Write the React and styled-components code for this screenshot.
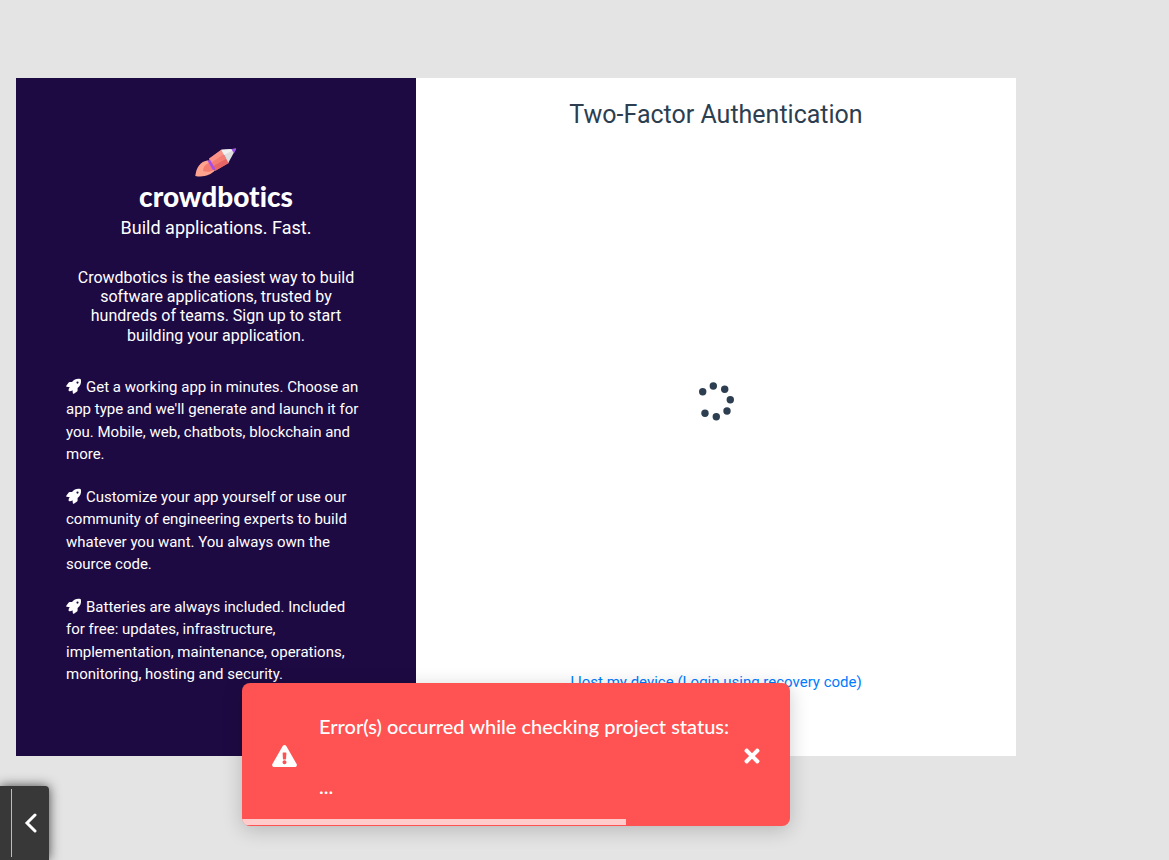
import React from "react";
import styled, { createGlobalStyle } from "styled-components";
import { FaExclamationTriangle, FaTimes } from "react-icons/fa";

const GlobalStyle = createGlobalStyle`
  *, *::before, *::after { box-sizing: border-box; }
  body {
    margin: 0;
    background: #e4e4e4;
    color: #2c3e50;
    font-family: Roboto, "Liberation Sans", sans-serif;
  }
  h1, p, ul { margin: 0; padding: 0; }
`;

const Page = styled.main`
  min-height: 100vh;
  padding: 78px 16px 104px;
`;

const Card = styled.div`
  position: relative;
  display: grid;
  grid-template-columns: 2fr 3fr;
  width: 100%;
  max-width: 1000px;
  background: #fff;
`;

const Promo = styled.section`
  display: flex;
  flex-direction: column;
  align-items: center;
  padding: 70px 50px;
  background: #1e0a43;
  color: #fff;
`;

const LogoMark = styled.svg`
  display: block;
  width: 42px;
  height: 30px;
`;

const Wordmark = styled.div`
  font: 900 28px/36px Lato, "Liberation Sans", sans-serif;
  font-variant-ligatures: none;
`;

const Tagline = styled.p`
  font-size: 18px;
  line-height: 28px;
`;

const Intro = styled.p`
  margin-top: 26px;
  padding: 0 8px;
  font-size: 16px;
  line-height: 1.2;
  text-align: center;
`;

const Benefits = styled.ul`
  display: flex;
  flex-direction: column;
  gap: 20px;
  width: 100%;
  margin-top: 31px;
  list-style: none;
`;

const Benefit = styled.li`
  font-size: 15px;
  line-height: 1.5;
`;

const BulletIcon = styled.svg`
  width: 16px;
  height: 16px;
  margin-right: 4px;
  fill: currentColor;
  vertical-align: -2px;
`;

const AuthPanel = styled.section`
  display: flex;
  flex-direction: column;
  align-items: center;
  justify-content: space-between;
  padding: 20px 20px 63px;
`;

const Title = styled.h1`
  font-size: 25px;
  font-weight: 400;
  line-height: 33px;
`;

const Spinner = styled.svg`
  width: 40px;
  height: 40px;
  fill: #2c3e50;
`;

const RecoveryLink = styled.a`
  color: #007bff;
  font-size: 15px;
  line-height: 22px;
  text-decoration: none;
`;

const Toast = styled.div`
  position: absolute;
  left: 50%;
  bottom: -70px;
  display: flex;
  align-items: center;
  width: 548px;
  max-width: 100%;
  padding: 28px 30px 25px;
  overflow: hidden;
  transform: translateX(-50%);
  border-radius: 8px;
  background: #ff5252;
  box-shadow: 0 4px 20px rgba(0, 0, 0, 0.2);
  color: #fff;
  font-family: Lato, "Liberation Sans", sans-serif;
  font-size: 20px;
  font-weight: 500;
  line-height: 30px;
`;

const ToastIcon = styled(FaExclamationTriangle)`
  flex: none;
  width: 25px;
  height: 22px;
`;

const ToastBody = styled.div`
  display: flex;
  flex: 1;
  flex-direction: column;
  gap: 30px;
  min-width: 0;
  margin-left: 22px;
  white-space: nowrap;
`;

const CloseButton = styled.button`
  display: flex;
  flex: none;
  padding: 0;
  border: 0;
  background: none;
  color: inherit;
  cursor: pointer;

  svg { width: 16px; height: 22px; }
`;

const ToastProgress = styled.div`
  position: absolute;
  left: 0;
  bottom: 1px;
  width: 70%;
  height: 6px;
  background: rgba(255, 255, 255, 0.7);
`;

const SideTab = styled.button`
  position: fixed;
  left: 0;
  bottom: 0;
  display: flex;
  align-items: center;
  width: 49px;
  height: 74px;
  padding: 3px 12px 3px 11px;
  border: 0;
  border-radius: 0 4px 0 0;
  background: #383838;
  box-shadow: 0 0 12px rgba(0, 0, 0, 0.7);
  cursor: pointer;

  &::before {
    content: "";
    align-self: stretch;
    width: 1px;
    margin-right: 12px;
    background: #bdbdbd;
  }

  svg { width: 13px; height: 20px; }
`;

const benefits = [
  "Get a working app in minutes. Choose an app type and we'll generate and launch it for you. Mobile, web, chatbots, blockchain and more.",
  "Customize your app yourself or use our community of engineering experts to build whatever you want. You always own the source code.",
  "Batteries are always included. Included for free: updates, infrastructure, implementation, maintenance, operations, monitoring, hosting and security.",
];

const spinnerDots = [
  [6.7, 10.7],
  [17.3, 5],
  [28.7, 8.3],
  [34.3, 18.7],
  [31, 30],
  [20.3, 35.7],
  [9, 32.3],
];

function PencilRocket() {
  return (
    <LogoMark viewBox="30 21 126 90" aria-hidden="true">
      <path d="M31 105C33 83 44 61 70 58L90 88C77 103 54 110 31 105Z" fill="#ffa38f" />
      <path d="M54 90C55 76 63 68 75 66L88 86C79 92 66 94 54 90Z" fill="#f47c70" />
      <path d="M72 53L109 26L131 66L91 89Z" fill="#f47c72" />
      <path d="M72 53L109 26L117 39L79 65Z" fill="#fa9288" />
      <path d="M84 76L124 53L131 66L91 89Z" fill="#e76565" />
      <path d="M109 26L153 23L130 65Z" fill="#dedede" />
      <path d="M109 26L153 23L117 42Z" fill="#f1f1f1" />
      <path d="M139 24L154 23L147 37Z" fill="#9b51e8" />
      <path d="M68 60L75 56L91 84L84 88Z" fill="#a64df0" />
    </LogoMark>
  );
}

function Rocket() {
  return (
    <BulletIcon viewBox="0 0 16 16" aria-hidden="true">
      <path
        fillRule="evenodd"
        d="M14.3 1C11 .4 8.3 1.2 6 4.1H4C3.2 4.1 2.7 4.4 2.3 5L.3 7.8C0 8.4.3 8.8.9 8.8L3.8 9.2C2.9 10.2 2.5 11.2 2.6 12.6C2.6 13 2.9 13.2 3.3 13.2C4.6 13.3 5.7 13 6.5 12.2L6.8 15C6.8 15.7 7.3 16 7.9 15.7L10.7 13.8C11.3 13.4 11.6 13 11.6 12.2V10C14.5 7.8 15.5 5 14.9 1.6C14.8 1.2 14.6 1 14.3 1ZM11.5 3.5A1.1 1.1 0 1 0 11.5 5.7A1.1 1.1 0 1 0 11.5 3.5Z"
      />
    </BulletIcon>
  );
}

export default function App() {
  return (
    <>
      <GlobalStyle />
      <Page>
        <Card>
          <Promo>
            <PencilRocket />
            <Wordmark>crowdbotics</Wordmark>
            <Tagline>Build applications. Fast.</Tagline>
            <Intro>
              Crowdbotics is the easiest way to build software applications,
              trusted by hundreds of teams. Sign up to start building your
              application.
            </Intro>
            <Benefits>
              {benefits.map((text) => (
                <Benefit key={text}>
                  <Rocket />
                  {text}
                </Benefit>
              ))}
            </Benefits>
          </Promo>
          <AuthPanel>
            <Title>Two-Factor Authentication</Title>
            <Spinner viewBox="0 0 40 40" role="img" aria-label="Loading">
              {spinnerDots.map(([cx, cy]) => (
                <circle key={`${cx}-${cy}`} cx={cx} cy={cy} r="3.7" />
              ))}
            </Spinner>
            <RecoveryLink href="#recovery">
              I lost my device (Login using recovery code)
            </RecoveryLink>
          </AuthPanel>
          <Toast role="alert">
            <ToastIcon aria-hidden="true" />
            <ToastBody>
              <p>Error(s) occurred while checking project status:</p>
              <p>...</p>
            </ToastBody>
            <CloseButton type="button" aria-label="Close">
              <FaTimes />
            </CloseButton>
            <ToastProgress />
          </Toast>
        </Card>
      </Page>
      <SideTab type="button" aria-label="Open side panel">
        <svg viewBox="0 0 13 20" fill="none" stroke="#fff" strokeWidth="3" aria-hidden="true">
          <path d="M11 2L3 10L11 18" strokeLinecap="round" />
        </svg>
      </SideTab>
    </>
  );
}
